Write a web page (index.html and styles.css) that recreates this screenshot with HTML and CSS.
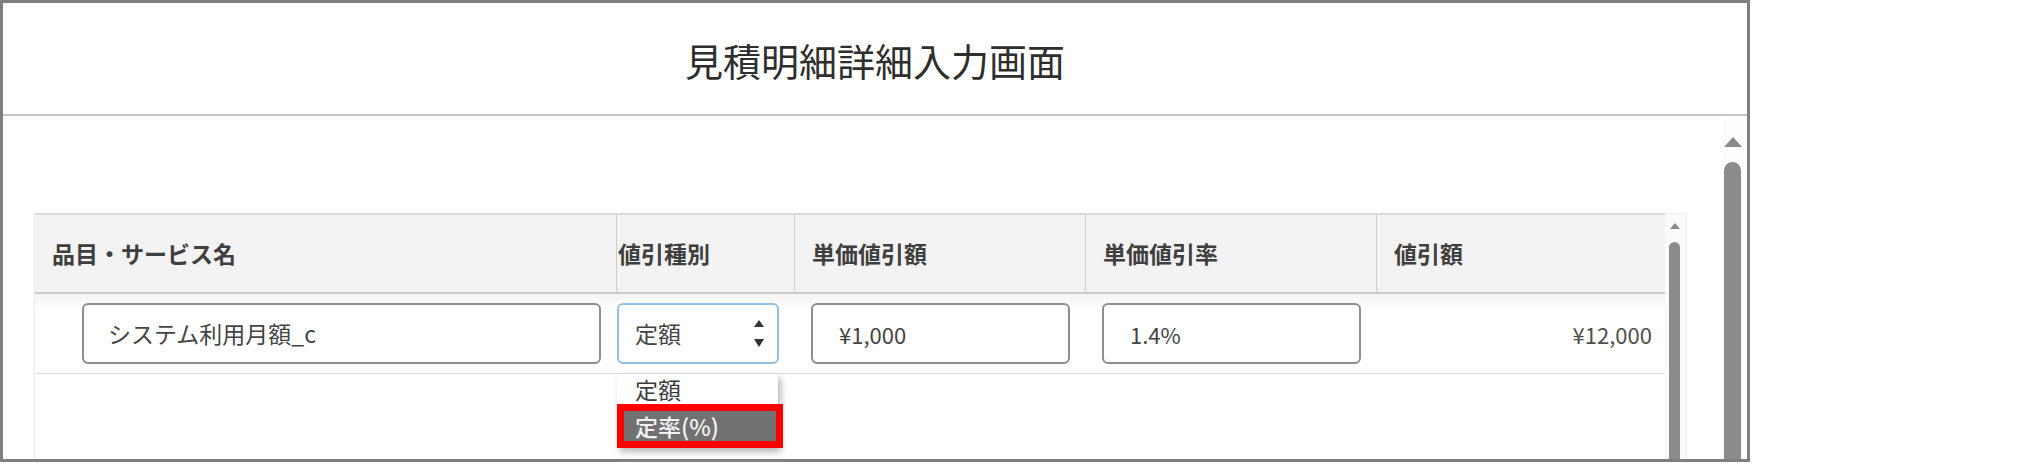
FILE: index.html
```html
<!DOCTYPE html>
<html lang="ja">
<head>
<meta charset="utf-8">
<title>見積明細詳細入力画面</title>
<link rel="stylesheet" href="styles.css">
</head>
<body>
<div class="frame">
  <header class="title-bar">
    <h1 class="title">見積明細詳細入力画面</h1>
  </header>
  <div class="content">
    <div class="main">
      <div class="grid">
        <div class="table">
          <div class="row head">
            <div class="th">品目・サービス名</div>
            <div class="th th-tight">値引種別</div>
            <div class="th">単価値引額</div>
            <div class="th">単価値引率</div>
            <div class="th">値引額</div>
          </div>
          <div class="row body">
            <div class="td td-name"><div class="field field-name">システム利用月額_c</div></div>
            <div class="td td-type">
              <div class="select">
                <span class="select-text">定額</span>
                <svg class="spinner" width="10" height="27" viewBox="0 0 10 27"><polygon points="0,7 5,0 10,7" fill="#333"/><polygon points="0,19 10,19 5,27" fill="#333"/></svg>
                <div class="dropdown">
                  <div class="option">定額</div>
                  <div class="option selected">定率(%)</div>
                </div>
              </div>
            </div>
            <div class="td td-num"><div class="field field-num">¥1,000</div></div>
            <div class="td td-num"><div class="field field-num">1.4%</div></div>
            <div class="td td-amount">¥12,000</div>
          </div>
        </div>
        <div class="inner-scroll">
          <span class="inner-arrow"></span>
          <span class="inner-thumb"></span>
        </div>
      </div>
    </div>
    <div class="outer-scroll">
      <span class="outer-arrow"></span>
      <span class="outer-thumb"></span>
    </div>
  </div>
</div>
</body>
</html>
```
FILE: styles.css
```css
html, body {
  margin: 0;
  padding: 0;
  background: #ffffff;
}
body {
  font-family: "Noto Sans CJK JP", "Noto Sans", sans-serif;
  color: #444;
}
.frame {
  width: 1750px;
  height: 462px;
  box-sizing: border-box;
  border: 3px solid #7f7f7f;
  display: flex;
  flex-direction: column;
  overflow: hidden;
}
.title-bar {
  height: 111px;
  flex: 0 0 auto;
  border-bottom: 2px solid #c6c6c6;
  display: flex;
  align-items: center;
  justify-content: center;
}
.title {
  margin: 0;
  font-size: 38px;
  font-weight: 400;
  line-height: 1;
  color: #2e2e2e;
  padding-top: 2px;
}
.content {
  flex: 1;
  display: flex;
  overflow: hidden;
  min-height: 0;
}
.main {
  flex: 1;
  padding: 97px 34px 0 31px;
  min-width: 0;
}
.grid {
  display: flex;
  height: 260px;
}
.table {
  width: 1631px;
  border-left: 1px solid #ececec;
  box-sizing: border-box;
}
.row {
  display: grid;
  grid-template-columns: 581px 178px 291px 291px 289px;
}
.head {
  height: 81px;
  box-sizing: border-box;
  background: #f3f3f3;
  border-top: 2px solid #dadada;
  border-bottom: 2px solid #cbcbcb;
}
.th {
  display: flex;
  align-items: center;
  padding-left: 17px;
  font-size: 23px;
  font-weight: 700;
  line-height: 1;
  color: #3f3f3f;
  border-left: 1px solid #cccccc;
}
.th:first-child {
  border-left: none;
}
.th-tight {
  padding-left: 1px;
}
.body {
  height: 80px;
  box-sizing: border-box;
  border-bottom: 1px solid #dcdcdc;
  background: linear-gradient(to bottom, #f4f4f4 0, #ffffff 16px);
  align-items: center;
}
.td {
  display: flex;
  align-items: center;
  font-size: 23px;
  line-height: 1;
  color: #444;
}
.td-name {
  padding-left: 47px;
}
.td-type {
  padding-left: 1px;
}
.td-num {
  padding-left: 17px;
}
.td-amount {
  justify-content: flex-end;
  padding-right: 13px;
  font-size: 22px;
  color: #505050;
}
.field {
  height: 61px;
  box-sizing: border-box;
  border: 2px solid #8e8e8e;
  border-radius: 6px;
  background: #fff;
  display: flex;
  align-items: center;
  padding-left: 24px;
  white-space: nowrap;
}
.field-name {
  width: 519px;
}
.field-num {
  width: 259px;
  font-size: 22px;
  padding-left: 26px;
}
.select {
  position: relative;
  width: 162px;
  height: 61px;
  box-sizing: border-box;
  border: 2px solid #94c0e8;
  border-radius: 6px;
  background: #fff;
  display: flex;
  align-items: center;
  padding-left: 16px;
}
.spinner {
  position: absolute;
  right: 13px;
  top: 15px;
}
.dropdown {
  position: absolute;
  left: -2px;
  top: 69px;
  width: 161px;
  background: #fff;
  box-shadow: 3px 4px 7px rgba(0, 0, 0, 0.28);
  z-index: 5;
}
.option {
  height: 30px;
  display: flex;
  align-items: center;
  padding-left: 18px;
  font-size: 23px;
  line-height: 1;
  color: #3c3c3c;
}
.option.selected {
  width: 152px;
  box-sizing: border-box;
  margin: 7px 0 7px 7px;
  padding-left: 11px;
  background: #717171;
  color: #f2f2f2;
  font-weight: 500;
  outline: 7px solid #ff0000;
}
.inner-scroll {
  position: relative;
  width: 22px;
  box-sizing: border-box;
  background: #fbfbfb;
  border-top: 1px solid #f0f0f0;
  border-right: 1px solid #ededed;
}
.inner-arrow {
  position: absolute;
  left: 5px;
  top: 9px;
  width: 0;
  height: 0;
  border-left: 5px solid transparent;
  border-right: 5px solid transparent;
  border-bottom: 6px solid #8a8a8a;
}
.inner-thumb {
  position: absolute;
  left: 4px;
  top: 28px;
  width: 11px;
  height: 240px;
  border-radius: 6px 6px 0 0;
  background: #8b8b8b;
}
.outer-scroll {
  position: relative;
  width: 26px;
  flex: 0 0 auto;
  background: #fdfdfd;
}
.outer-arrow {
  position: absolute;
  left: 3px;
  top: 21px;
  width: 0;
  height: 0;
  border-left: 9px solid transparent;
  border-right: 9px solid transparent;
  border-bottom: 10px solid #8a8a8a;
}
.outer-thumb {
  position: absolute;
  left: 3px;
  top: 46px;
  width: 17px;
  height: 320px;
  border-radius: 9px 9px 0 0;
  background: #8b8b8b;
}
```
